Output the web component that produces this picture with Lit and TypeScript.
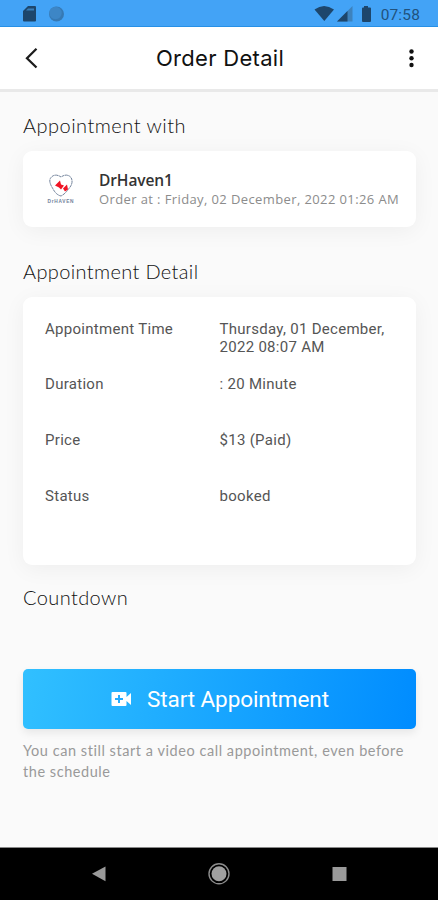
import { LitElement, html, css, svg } from "lit";
import { customElement } from "lit/decorators.js";

const DETAILS = [
  { key: "time", label: "Appointment Time", lines: ["Thursday, 01 December,", "2022 08:07 AM"] },
  { key: "duration", label: "Duration", lines: [": 20 Minute"] },
  { key: "price", label: "Price", lines: ["$13 (Paid)"] },
  { key: "status", label: "Status", lines: ["booked"] },
];

@customElement("status-bar")
class StatusBar extends LitElement {
  static styles = css`
    :host { display: flex; height: 27px; box-sizing: border-box; background: #43a3f6; border-bottom: 1px solid #2790e6; padding: 0 18px 0 22px; align-items: center; justify-content: space-between; }
    .group { display: flex; align-items: center; }
    svg { display: block; }
    .time { font: 15.5px/20px Roboto, sans-serif; color: #21527d; letter-spacing: 0.15px; margin-left: 8px; padding-top: 3px; }
  `;
  render() {
    return html`
      <svg width="44" height="26" viewBox="22 0 44 26">
        <path d="M28 6h7q1 0 1 1v13.500q0 1-1 1H24q-1 0-1-1V11z" fill="#1d466c" />
        <path d="M28 8.500h6v2h-8z" fill="#397eb9" />
        <circle cx="56.500" cy="14" r="7.500" fill="#3679b4" />
        <circle cx="55.500" cy="13" r="6.200" fill="#3d86c6" />
      </svg>
      <div class="group">
        <svg width="60" height="26" viewBox="314 0 60 26">
          <path d="M315.500 9.500Q325 2.500 335 9.500L325.300 21z" fill="#1d466c" />
          <path d="M338 21.500L353.500 6v15.500z" fill="#3d82bd" />
          <path d="M338 21.500L348.500 11v10.500z" fill="#1d466c" />
          <path d="M365 6h4v1.500h2q1 0 1 1V21q0 1-1 1h-7q-1 0-1-1V8.500q0-1 1-1h1z" fill="#1d466c" />
        </svg>
        <span class="time">07:58</span>
      </div>
    `;
  }
}

@customElement("title-bar")
class TitleBar extends LitElement {
  static styles = css`
    :host { display: grid; grid-template-columns: 136px 1fr 14px; height: 65px; box-sizing: border-box; background: #fff; border-bottom: 3px solid #e9e9e9; align-items: center; padding: 0 20px; }
    svg { display: block; }
    .title { font: 22px/30px Inter, sans-serif; color: #111; letter-spacing: 0.3px; white-space: nowrap; }
  `;
  render() {
    return html`
      <svg width="24" height="28" viewBox="0 0 24 28"><path d="M16.500 4.800L7 14.200L16.500 23.500" fill="none" stroke="#1c1c1c" stroke-width="2.300" /></svg>
      <span class="title">Order Detail</span>
      <svg width="14" height="24" viewBox="0 0 14 24">
        ${[5.5, 12.2, 19].map((y) => svg`<circle cx="7.500" cy=${y} r="2.200" fill="#111" />`)}
      </svg>
    `;
  }
}

@customElement("nav-bar")
class NavBar extends LitElement {
  static styles = css`
    :host { display: flex; height: 53px; box-sizing: border-box; background: #000; border-top: 1px solid #888; align-items: center; justify-content: space-between; padding: 0 87px; }
    svg { display: block; }
  `;
  render() {
    return html`
      <svg width="24" height="24"><path d="M5 11.800L18.500 4.500v14.700z" fill="#9a9a9a" /></svg>
      <svg width="24" height="24"><circle cx="12" cy="11.800" r="10" fill="none" stroke="#8c8c8c" stroke-width="1.400" /><circle cx="12" cy="11.800" r="7.500" fill="#a0a0a0" /></svg>
      <svg width="24" height="24"><rect x="5.500" y="5" width="14" height="14" fill="#9a9a9a" /></svg>
    `;
  }
}

@customElement("app-root")
class AppRoot extends LitElement {
  static styles = css`
    :host { display: flex; flex-direction: column; height: 900px; background: #fafafa; }
    main { flex: 1; padding: 0 22px 0 23px; overflow: hidden; }
    h2 { margin: 0; font: 300 20px/26px Lato, sans-serif; color: #111; white-space: nowrap; }
    .with { padding-top: 20px; letter-spacing: 0.48px; }
    .detail { padding-top: 31px; letter-spacing: 0.36px; }
    .countdown { padding-top: 19px; letter-spacing: 0.4px; }
    .card { background: #fff; border-radius: 9px; box-shadow: 0 4px 22px rgba(0, 0, 0, 0.05); }
    .doctor { margin-top: 13px; height: 76px; display: flex; align-items: center; }
    .logo { display: block; width: 30px; height: 34px; margin: 0 0 3px 23px; }
    .info { margin-left: 23px; white-space: nowrap; }
    .name { font: 600 15.500px/20px "Open Sans", sans-serif; color: #333; letter-spacing: -0.1px; }
    .ordered { font: 500 13px/19px "Open Sans", sans-serif; color: #8c8c8c; letter-spacing: 0.39px; }
    .rows { margin-top: 13px; height: 268px; box-sizing: border-box; padding: 22.500px 0 0 22px; }
    .row { display: grid; grid-template-columns: 174.500px 1fr; height: 55.800px; font: 15px/18px Roboto, sans-serif; color: #555; letter-spacing: 0.29px; white-space: nowrap; }
    .line { display: block; }
    .start { margin: 59px 0 0; padding: 0; width: 100%; height: 60px; border: 0; border-radius: 5px; display: flex; align-items: center; justify-content: center; background: linear-gradient(100deg, #31c0ff, #008cff); box-shadow: 0 4px 9px rgba(0, 0, 0, 0.08); color: #fff; font: 22.500px/30px Roboto, sans-serif; letter-spacing: -0.1px; }
    .start svg { display: block; margin-right: 15px; }
    .note { margin: 11px 0 0; font: 14.500px/21px Lato, sans-serif; color: #999; letter-spacing: 0.55px; white-space: nowrap; }
  `;
  render() {
    return html`
      <status-bar></status-bar>
      <title-bar></title-bar>
      <main>
        <h2 class="with">Appointment with</h2>
        <section class="card doctor">
          <svg class="logo" viewBox="0 0 30 34">
            <path d="M15 25Q10 24 6.500 17Q2 10 5 6.500Q9 2 15 6Q21 2 25 6.500Q28 12 22.500 18Q19 23 15 25z" fill="#fff" stroke="#71829b" stroke-width="1" stroke-dasharray="3 .5" />
            <path d="M9 14.500l5-5 1 4 3 1-3 4-2-2zM17 17.500l4-4 1 5-3 2z" fill="#f01424" />
            <text x="1.500" y="32" font-family="Liberation Sans" font-weight="700" font-size="4.800" textLength="26" fill="#71829b">DrHAVEN</text>
          </svg>
          <div class="info">
            <div class="name">DrHaven1</div>
            <div class="ordered">Order at : Friday, 02 December, 2022 01:26 AM</div>
          </div>
        </section>
        <h2 class="detail">Appointment Detail</h2>
        <section class="card rows">
          ${DETAILS.map((d) => html`
            <div class="row ${d.key}">
              <span>${d.label}</span>
              <span>${d.lines.map((l) => html`<span class="line">${l}</span>`)}</span>
            </div>
          `)}
        </section>
        <h2 class="countdown">Countdown</h2>
        <button class="start">
          <svg width="22" height="16" viewBox="0 0 22 16">
            <path d="M2.500 1h13q1 0 1 1v4l4.500-4v12l-4.500-4v4q0 1-1 1h-13q-1 0-1-1V2q0-1 1-1z" fill="#fff" />
            <path d="M9 4v8M5 8h8" stroke="#26acff" stroke-width="2" />
          </svg>
          <span>Start Appointment</span>
        </button>
        <p class="note">You can still start a video call appointment, even before<br />the schedule</p>
      </main>
      <nav-bar></nav-bar>
    `;
  }
}
